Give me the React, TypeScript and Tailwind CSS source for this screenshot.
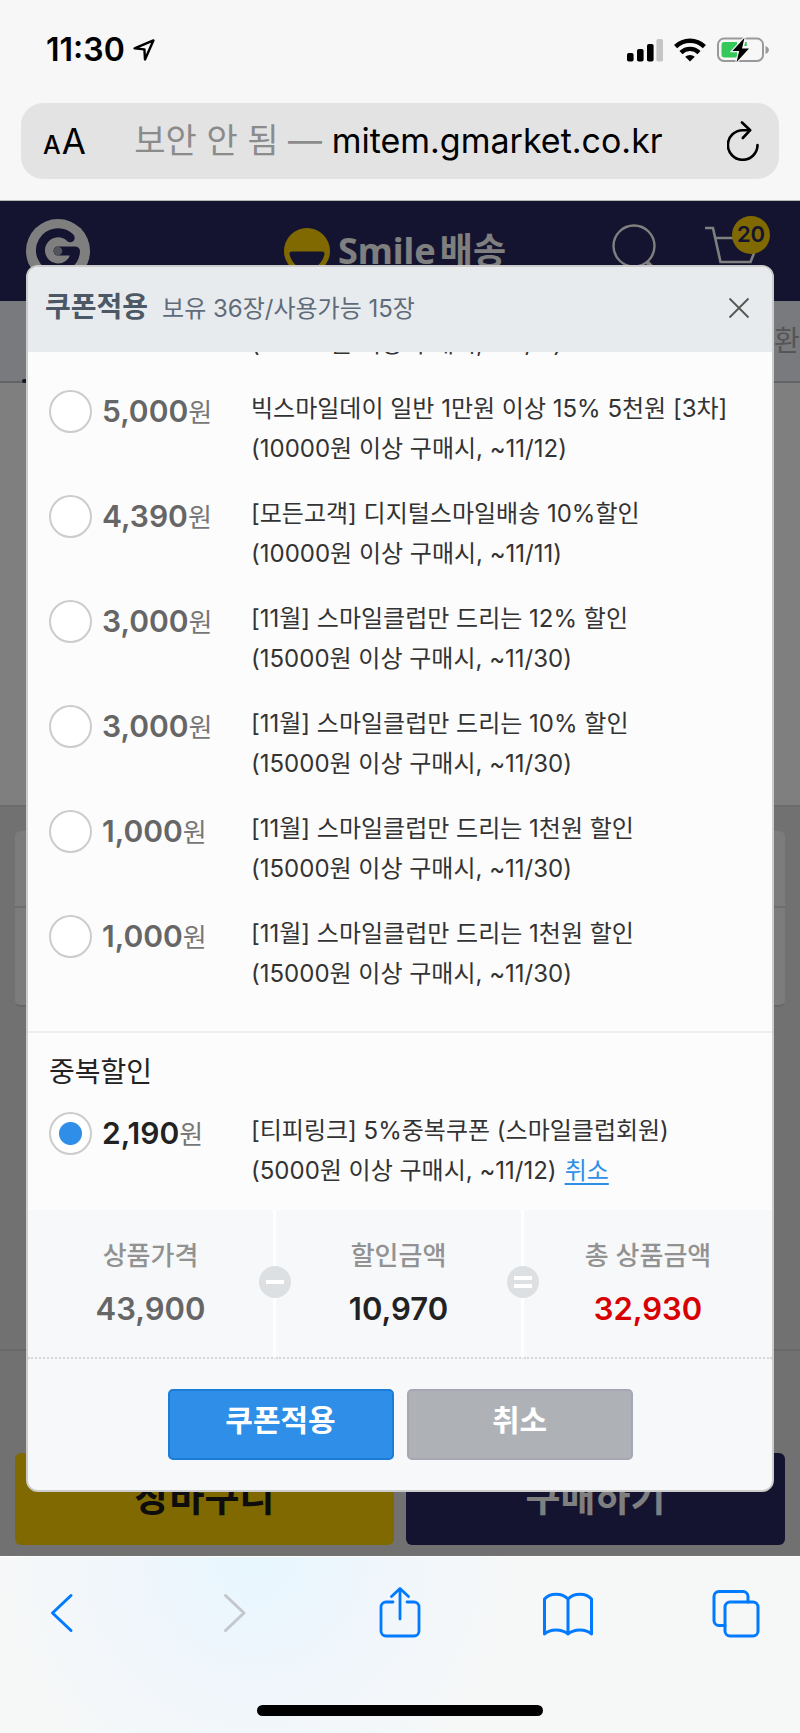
interface Coupon {
  id: string;
  price: string;
  title: string;
  condition: string;
}

interface SummaryItem {
  label: string;
  value: string;
  color: string;
  operator?: "minus" | "equals";
}

const coupons: Coupon[] = [
  { id: "c1", price: "5,000", title: "빅스마일데이 일반 1만원 이상 15% 5천원 [3차]", condition: "(10000원 이상 구매시, ~11/12)" },
  { id: "c2", price: "4,390", title: "[모든고객] 디지털스마일배송 10%할인", condition: "(10000원 이상 구매시, ~11/11)" },
  { id: "c3", price: "3,000", title: "[11월] 스마일클럽만 드리는 12% 할인", condition: "(15000원 이상 구매시, ~11/30)" },
  { id: "c4", price: "3,000", title: "[11월] 스마일클럽만 드리는 10% 할인", condition: "(15000원 이상 구매시, ~11/30)" },
  { id: "c5", price: "1,000", title: "[11월] 스마일클럽만 드리는 1천원 할인", condition: "(15000원 이상 구매시, ~11/30)" },
  { id: "c6", price: "1,000", title: "[11월] 스마일클럽만 드리는 1천원 할인", condition: "(15000원 이상 구매시, ~11/30)" },
];

const extraCoupon: Coupon = {
  id: "d1",
  price: "2,190",
  title: "[티피링크] 5%중복쿠폰 (스마일클럽회원)",
  condition: "(5000원 이상 구매시, ~11/12)",
};

const summary: SummaryItem[] = [
  { label: "상품가격", value: "43,900", color: "text-[#666]" },
  { label: "할인금액", value: "10,970", color: "text-[#222]", operator: "minus" },
  { label: "총 상품금액", value: "32,930", color: "text-[#d80000]", operator: "equals" },
];

function StatusBar() {
  return (
    <div className="flex items-center justify-between pl-[46px] pr-[31px] pt-7 h-[72px]">
      <div className="flex items-center gap-2">
        <span className="text-[32px] leading-10 font-semibold text-black">11:30</span>
        <svg width="22" height="22" viewBox="0 0 22 22" fill="none" stroke="#000" strokeWidth="2.4" strokeLinejoin="round">
          <path d="M1.6 9.4 20.4 1.4 12 20.4 11.4 10.4Z" />
        </svg>
      </div>
      <div className="flex items-center gap-[11px]">
        <svg width="36" height="24" viewBox="0 0 36 24">
          <rect x="0" y="15" width="6.6" height="8.6" rx="1.8" />
          <rect x="10" y="11" width="6.6" height="12.6" rx="1.8" />
          <rect x="20" y="6" width="6.6" height="17.6" rx="1.8" />
          <rect x="29.400" y="1" width="6.6" height="22.6" rx="1.8" fill="#c5c5c5" />
        </svg>
        <svg width="32" height="24" viewBox="0 0 32 24" fill="none" stroke="#000" strokeWidth="4.4">
          <path d="M1.6 8.600A20.5 20.5 0 0 1 30.4 8.600" />
          <path d="M7 14.6A12.8 12.8 0 0 1 25 14.6" />
          <path d="M16 23.6 11.2 18.8A7 7 0 0 1 20.8 18.8Z" fill="#000" stroke="none" />
        </svg>
        <svg width="52" height="26" viewBox="0 0 52 26">
          <rect x="1" y="1.6" width="45" height="22.4" rx="6" fill="none" stroke="#999" strokeWidth="2" />
          <path d="M48.5 9q3.4 1.4 3.4 4t-3.4 4z" fill="#999" />
          <path d="M7.500 5H20v15.500H7.500a3 3 0 0 1-3-3V8a3 3 0 0 1 3-3Z" fill="#34c759" />
          <path d="M28.200 5h1.500v4h-2.500z" fill="#34c759" />
          <path d="M27.500.8 15.400 14h6.800l-2.700 11.200L32 11.400h-7z" fill="#000" stroke="#f7f7f7" strokeWidth="2.400" paintOrder="stroke" />
        </svg>
      </div>
    </div>
  );
}

function AddressBar() {
  return (
    <div className="mt-[31px] mx-[21px] mb-[21px] h-[76px] rounded-[22px] bg-[#e3e3e3] flex items-center justify-between pl-[22px] pr-5 text-black">
      <button type="button" className="flex items-baseline gap-px pt-1" aria-label="AA">
        <span className="text-[25px] leading-10 font-medium">A</span>
        <span className="text-[35px] leading-10">A</span>
      </button>
      <p className="text-[34px] leading-10 whitespace-nowrap">
        <span className="text-[#8b8b8b]">보안 안 됨 — </span>
        mitem.gmarket.co.kr
      </p>
      <button type="button" aria-label="reload" className="pl-4">
        <svg width="32" height="40" viewBox="0 0 32 40" fill="none" stroke="#000" strokeWidth="2.6" strokeLinecap="round" strokeLinejoin="round">
          <path d="M30.500 24A14.800 14.800 0 1 1 15.700 9.200h7" />
          <path d="M15 1.500 23.200 9.200 15.800 17" />
        </svg>
      </button>
    </div>
  );
}

function GmarketLogo() {
  return (
    <svg width="64" height="64" viewBox="0 0 64 64" fill="none">
      <circle cx="32" cy="32" r="32" fill="#fff" />
      <path d="M44.200 18.800A17.500 17.500 0 1 0 49.500 32H32" stroke="#282860" strokeWidth="9" strokeLinecap="round" strokeLinejoin="round" />
      <circle cx="32" cy="32" r="4.300" fill="#a8a8b8" />
    </svg>
  );
}

function ProductPage() {
  return (
    <div className="[grid-area:1/1] flex flex-col bg-[#e3e3e3]">
      <div className="bg-[#282860] h-[100px] pl-[26px] pr-9 grid grid-cols-[1fr_auto_1fr] items-center">
        <GmarketLogo />
        <div className="flex items-center gap-2 text-white">
          <svg width="46" height="46" viewBox="0 0 46 46">
            <circle cx="23" cy="23" r="23" fill="#ffd200" />
            <path d="M8 23.500h30q3 0 2.400 3C38.500 35 32 41 23 41S7.500 35 5.600 26.500Q5 23.500 8 23.500Z" fill="#282860" />
          </svg>
          <span className="text-[36px] leading-10 font-bold font-['Noto_Sans','Noto_Sans_CJK_KR',sans-serif]">
            Smile<span className="ml-1">배송</span>
          </span>
        </div>
        <div className="flex items-center justify-end gap-12">
          <svg width="44" height="54" viewBox="0 0 44 54" fill="none" stroke="#fff" strokeWidth="2.400">
            <circle cx="22" cy="22" r="20.500" />
            <path d="m35 38 8 8" strokeWidth="4" />
          </svg>
          <div className="relative">
            <svg width="60" height="50" viewBox="0 0 60 50" fill="none" stroke="#fff" strokeWidth="2.600">
              <path d="M1 2h8l7.500 34h30l4-10M11.500 12h30" />
            </svg>
            <span className="absolute -right-[6px] -top-[10px] size-[38px] rounded-full bg-[#ffd200] text-[#282860] text-[22px] leading-9 font-semibold text-center">
              20
            </span>
          </div>
        </div>
      </div>
      <div className="h-[82px] bg-[#f0f4fa] border-b-2 border-[#c4c8cc] flex items-center justify-between">
        <span className="self-end -mb-[2px] ml-[22px] w-40 h-1 bg-[#283848] rounded-full" />
        <span className="w-[26px] text-[28px] leading-10 text-[#aaa]">환</span>
      </div>
      <div className="h-[424px] bg-white border-b-2 border-[#d8d8d8]" />
      <div className="mx-[15px] mt-6 h-[176px] rounded-md bg-[#f8f8f8] border-b-2 border-[#ccc]">
        <div className="h-[77px] border-b-2 border-[#ddd]" />
      </div>
      <div className="grow border-b-2 border-[#d2d2d2]" />
      <div className="mt-[102px] mb-[11px] px-[15px] grid grid-cols-2 gap-3">
        <button type="button" className="h-[92px] pb-1 rounded-md bg-[#ffd200] text-[#1a1a1a] text-[38px] font-bold">
          장바구니
        </button>
        <button type="button" className="h-[92px] pb-1 rounded-md bg-[#282860] text-white text-[38px] font-bold">
          구매하기
        </button>
      </div>
    </div>
  );
}

function CouponRow({ coupon, group, checked }: { coupon: Coupon; group: string; checked?: boolean }) {
  return (
    <div className="grid grid-cols-[202px_1fr] items-start">
      <div className="flex items-center gap-[10px] pt-px">
        <input
          id={coupon.id}
          type="radio"
          name={group}
          defaultChecked={checked}
          className="appearance-none size-[43px] shrink-0 rounded-full bg-white border-2 border-[#ccc] checked:bg-[radial-gradient(circle,#2f8ee7_11px,#fff_12px)]"
        />
        <label htmlFor={coupon.id} className="flex items-baseline">
          <span className={`text-[30px] leading-10 font-semibold ${checked ? "text-[#222]" : "text-[#666]"}`}>{coupon.price}</span>
          <span className="text-[26px] leading-10 text-[#777]">원</span>
        </label>
      </div>
      <label htmlFor={coupon.id} className="text-2xl leading-10 text-[#333]">
        {coupon.title}
        <br />
        {coupon.condition}
        {checked && (
          <a href="#cancel" className="ml-2 text-[#2f8ee7] underline underline-offset-4">
            취소
          </a>
        )}
      </label>
    </div>
  );
}

function CouponDialog() {
  return (
    <div className="[grid-area:1/1] relative bg-black/50 px-[26px] py-16">
      <section className="rounded-xl overflow-hidden border-2 border-[#ccc] bg-[#fcfcfc]">
        <header className="h-[85px] pl-[17px] pr-[22px] pb-[3px] flex items-center justify-between bg-[#e8ebed] text-[#4d5867]">
          <h2 className="flex items-baseline gap-[14px]">
            <span className="text-[28px] leading-10 font-bold">쿠폰적용</span>
            <span className="text-2xl leading-10 text-[#5f6b7a]">보유 36장/사용가능 15장</span>
          </h2>
          <button type="button" aria-label="close">
            <svg width="22" height="22" viewBox="0 0 22 22" stroke="#555" strokeWidth="1.800">
              <path d="M1.500 1.500 20.500 20.500M20.500 1.500 1.500 20.500" />
            </svg>
          </button>
        </header>

        <div className="overflow-hidden pl-[21px] pb-[37px] border-b-2 border-[#eee]">
          <p className="-mt-7 ml-[202px] text-2xl leading-10 text-[#333]">(10000원 이상 구매시, ~11/11)</p>
          <div className="mt-[25px] flex flex-col gap-[25px]">
            {coupons.map((coupon) => (
              <CouponRow key={coupon.id} coupon={coupon} group="coupon" />
            ))}
          </div>
        </div>

        <div className="pl-[21px] pt-[19px] pb-[19px]">
          <h3 className="mb-[19px] text-[28px] leading-10 text-[#222]">중복할인</h3>
          <CouponRow coupon={extraCoupon} group="extra" checked />
        </div>

        <dl className="grid grid-cols-3 bg-[#f7f8f9]">
          {summary.map((item) => (
            <div
              key={item.label}
              className="relative flex flex-col items-center gap-2 pt-[26px] pb-[23px] border-b-2 border-b-[#d5d8da] [border-bottom-style:dotted] border-r-[3px] border-r-white last:border-r-0"
            >
              <dt className="text-[26px] leading-10 font-medium text-[#929292]">{item.label}</dt>
              <dd className={`text-[31px] leading-[50px] font-semibold ${item.color}`}>{item.value}</dd>
              {item.operator && (
                <span className="absolute -left-[17px] top-14 size-8 rounded-full bg-[#dce0e3] flex flex-col items-center justify-center gap-1">
                  <i className="w-[18px] h-1 bg-white" />
                  {item.operator === "equals" && <i className="w-[18px] h-1 bg-white" />}
                </span>
              )}
            </div>
          ))}
        </dl>

        <div className="bg-[#f7f8f9] py-[30px] flex justify-center gap-[13px] text-white text-[30px] font-bold">
          <button type="button" className="w-[226px] h-[71px] pb-2 rounded-[5px] bg-[#2f8ee7] border-2 border-[#1b7dd6]">
            쿠폰적용
          </button>
          <button type="button" className="w-[226px] h-[71px] pb-2 rounded-[5px] bg-[#aeb2b7] border-2 border-[#a6a7b3]">
            취소
          </button>
        </div>
      </section>
    </div>
  );
}

function BrowserToolbar() {
  return (
    <footer className="border-t border-white bg-[#f6f8f8] bg-[radial-gradient(circle_at_32%_0%,#e7f6fe_0%,#f0f6fc_22%,#f6f8f8_45%)] pt-[30px] pb-[17px]">
      <nav className="flex justify-between px-9 text-[#007aff]">
        <button type="button" aria-label="back">
          <svg width="52" height="52" viewBox="0 0 52 52" fill="none" stroke="currentColor" strokeWidth="3" strokeLinecap="round" strokeLinejoin="round">
            <path d="M35 8.500 16.500 26 35 43.500" />
          </svg>
        </button>
        <button type="button" aria-label="forward" className="text-[#c4c7cc]">
          <svg width="52" height="52" viewBox="0 0 52 52" fill="none" stroke="currentColor" strokeWidth="3" strokeLinecap="round" strokeLinejoin="round">
            <path d="M20.500 8.500 39 26 20.500 43.500" />
          </svg>
        </button>
        <button type="button" aria-label="share">
          <svg width="52" height="52" viewBox="1 0 52 52" fill="none" stroke="currentColor" strokeWidth="2.800" strokeLinecap="round" strokeLinejoin="round">
            <path d="M20 15H13a5 5 0 0 0-5 5V44a5 5 0 0 0 5 5H41a5 5 0 0 0 5-5V20a5 5 0 0 0-5-5H34" />
            <path d="M27 32V2M18.500 9.500 27 1.500 35.500 9.500" />
          </svg>
        </button>
        <button type="button" aria-label="bookmarks">
          <svg width="52" height="52" viewBox="1 0 52 52" fill="none" stroke="currentColor" strokeWidth="3" strokeLinecap="round" strokeLinejoin="round">
            <path d="M26 12C20 5.500 8 5.500 2.500 12V47C8 41.500 20 41.500 26 47 32 41.500 44 41.500 49.500 47V12C44 5.500 32 5.500 26 12ZV47" />
          </svg>
        </button>
        <button type="button" aria-label="tabs">
          <svg width="52" height="52" viewBox="1 0 52 52" fill="none" stroke="currentColor" strokeWidth="3" strokeLinecap="round" strokeLinejoin="round">
            <rect x="14" y="15" width="33" height="34" rx="5" />
            <path d="M14 38.500H8a5 5 0 0 1-5-5V9.500a5 5 0 0 1 5-5H32a5 5 0 0 1 5 5V15" />
          </svg>
        </button>
      </nav>
      <div className="mt-[66px] mx-auto w-[286px] h-[11px] rounded-full bg-black" />
    </footer>
  );
}

export default function App() {
  return (
    <div className="min-h-screen bg-[#f7f7f7] font-['Inter','Noto_Sans_CJK_KR',sans-serif]">
      <div className="border-b border-[#b4b8b4]">
        <StatusBar />
        <AddressBar />
      </div>
      <main className="grid">
        <ProductPage />
        <CouponDialog />
      </main>
      <BrowserToolbar />
    </div>
  );
}
